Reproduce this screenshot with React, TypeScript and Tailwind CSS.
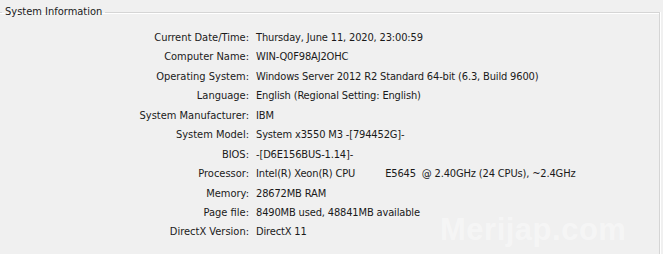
const rows: [string, string][] = [
  ["Current Date/Time:", "Thursday, June 11, 2020, 23:00:59"],
  ["Computer Name:", "WIN-Q0F98AJ2OHC"],
  ["Operating System:", "Windows Server 2012 R2 Standard 64-bit (6.3, Build 9600)"],
  ["Language:", "English (Regional Setting: English)"],
  ["System Manufacturer:", "IBM"],
  ["System Model:", "System x3550 M3 -[794452G]-"],
  ["BIOS:", "-[D6E156BUS-1.14]-"],
  ["Processor:", "Intel(R) Xeon(R) CPU          E5645  @ 2.40GHz (24 CPUs), ~2.4GHz"],
  ["Memory:", "28672MB RAM"],
  ["Page file:", "8490MB used, 48841MB available"],
  ["DirectX Version:", "DirectX 11"],
];

export default function App() {
  return (
    <div className="relative w-[663px] h-[254px] overflow-hidden bg-[#f0f0f0] text-[11px] text-[#1a1a1a] font-['DejaVu_Sans_Condensed','DejaVu_Sans',sans-serif] [font-stretch:condensed]">
      {/* group box */}
      <fieldset className="mt-[5px] w-[660px] h-[300px] border-t border-r border-[#d5d5d5] shadow-[inset_0_1px_0_#fff,1px_0_0_#fff]">
        <legend className="ml-[2px] px-[3px] leading-[14px]">System Information</legend>
        <div className="grid grid-cols-[249px_1fr] gap-x-[7px] pt-[9px]">
          {rows.map(([label, value]) => (
            <div key={label} className="contents">
              <div className="text-right h-[19.45px] leading-[19.45px] whitespace-nowrap">{label}</div>
              <div className="h-[19.45px] leading-[19.45px] whitespace-pre tracking-[-0.15px]">{value}</div>
            </div>
          ))}
        </div>
      </fieldset>
      {/* watermark */}
      <div className="absolute left-[440px] top-[212px] text-[31px] leading-[36px] font-bold text-white/40 font-['Liberation_Sans',sans-serif] tracking-[0.5px]">
        Merijap.com
      </div>
    </div>
  );
}
